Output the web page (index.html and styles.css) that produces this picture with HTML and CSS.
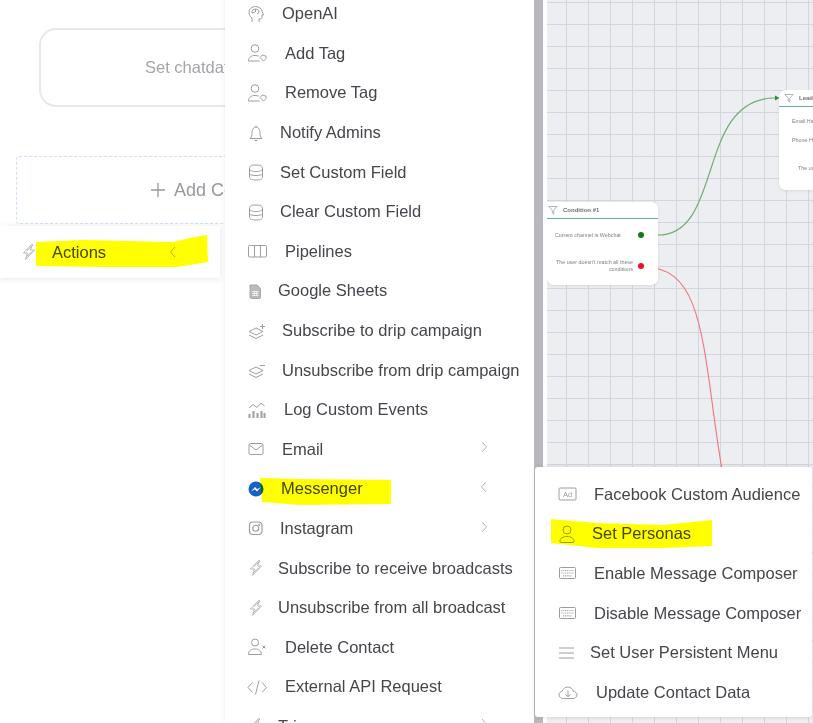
FILE: index.html
```html
<!DOCTYPE html>
<html lang="en">
<head>
<meta charset="utf-8">
<title>Flow builder</title>
<link rel="stylesheet" href="styles.css">
</head>
<body>
<svg class="defs" width="0" height="0" aria-hidden="true">
  <symbol id="i-brain" viewBox="0 0 20 20"><path d="M5 18v-4C3 12.600 2 10.800 2 8.500 2 5 5 2.500 8.500 2.500S15 5 15.300 8l1.200 3h-1.500v2.500c0 1-.8 1.500-1.700 1.500H12v3"/><path d="M5 9c-.5-2.500 1.500-4 3.500-4 2.200 0 3.800 1.500 3.500 3.500M8.500 5v3M5 9l3-1M12 8.500l-2 1.500"/></symbol>
  <symbol id="i-usertag" viewBox="0 0 20 20"><circle cx="8" cy="5.500" r="3.800"/><path d="M1.500 18c0-3.800 2.800-5.500 6.500-5.500 1.500 0 2.800.2 3.800.7M1.500 18h11"/><path d="M13 14.500l2.500-2.500 3.500 1.200v2.300l-2.500 2.500z"/></symbol>
  <symbol id="i-bell" viewBox="0 0 20 20"><path d="M3 15.500c1.500-1.500 2-3 2-6C5 6.500 6.500 4 9 4s4 2.500 4 5.500c0 3 .5 4.500 2 6zM9 2.500V4M7.500 17.500h3"/></symbol>
  <symbol id="i-db" viewBox="0 0 20 20"><path d="M2.500 6c0-2 2.500-3 6.500-3s6.500 1 6.500 3v9c0 2-2.500 3-6.500 3s-6.500-1-6.500-3z"/><path d="M2.500 6.500c0 2 2.500 3 6.500 3s6.500-1 6.500-3M2.500 12c1 1 3.500 1.500 6.500 1.500s5.500-.5 6.500-1.500"/></symbol>
  <symbol id="i-pipe" viewBox="0 0 20 20"><rect x="1.500" y="4.500" width="18" height="11.500" rx="1"/><path d="M7.500 4.500V16M13.500 4.500V16"/></symbol>
  <symbol id="i-sheet" viewBox="0 0 20 20"><path class="solid soft" d="M3 4h7l3.500 3.500V16a1.500 1.500 0 0 1-1.500 1.500H4.500A1.500 1.500 0 0 1 3 16z"/><path class="cut" d="M5 10.500h6.500M5 12.500h6.500M5 14.500h6.500M7.500 10.500v4M9.500 10.500v4"/></symbol>
  <symbol id="i-layplus" viewBox="0 0 20 20"><path d="M2 10.500L9 7l7 3.500-7 3.500zM2 14l7 3.500 7-3.500"/><path d="M13 5.500h5M15.500 3v5"/></symbol>
  <symbol id="i-laymin" viewBox="0 0 20 20"><path d="M2 10.500L9 7l7 3.500-7 3.500zM2 14l7 3.500 7-3.500"/><path d="M13 5.500h5"/></symbol>
  <symbol id="i-chart" viewBox="0 0 20 20"><path d="M2 8l4-3.500 4 3 4-4.500 3.500 3"/><path class="thick" d="M2.500 18v-4M6.500 18v-7M10.500 18v-5M14.500 18v-7M17.500 18v-5"/></symbol>
  <symbol id="i-mail" viewBox="0 0 20 20"><rect x="2" y="4.500" width="14" height="11" rx="1.500"/><path d="M2.500 6l6.500 5 6.500-5"/></symbol>
  <symbol id="i-ig" viewBox="0 0 20 20"><rect x="2.500" y="3" width="12.500" height="12.500" rx="3.500" class="mid"/><circle cx="8.750" cy="9.250" r="3" class="mid"/><circle cx="12.200" cy="5.800" r=".7" class="solid"/></symbol>
  <symbol id="i-bolt" viewBox="0 0 20 20"><g class="pale"><path d="M11.500 2.500L3.500 11h4l-2 6.500 9-9.500h-4l2-5.500z"/><path d="M7 8.500L13 3M6.500 14.500l6-5"/></g></symbol>
  <symbol id="i-userx" viewBox="0 0 20 20"><circle cx="8" cy="5.500" r="3.500"/><path d="M1.500 17.500c0-3.800 2.800-5.500 6.500-5.500s6.500 1.700 6.500 5.500z"/><path d="M15.500 8.500l3 3M18.500 8.500l-3 3"/></symbol>
  <symbol id="i-code" viewBox="0 0 20 20"><path d="M5.500 5.500L1 10.500l4.500 5M15 5.500l4.500 5-4.500 5M12 3.500L8.500 17.500"/></symbol>
  <symbol id="i-ad" viewBox="0 0 20 20"><rect x="1" y="4" width="17" height="12" rx="1"/><text x="9.500" y="13" class="adtxt">Ad</text></symbol>
  <symbol id="i-user" viewBox="0 0 20 20"><circle cx="9" cy="6" r="4"/><path d="M2 17.500c0-3.500 3-5 7-5s7 1.500 7 5c0 .5-.5 1-1 1H3c-.5 0-1-.5-1-1z"/></symbol>
  <symbol id="i-kbd" viewBox="0 0 20 20"><rect x="1.500" y="4.500" width="16" height="11" rx="1"/><path class="dots" d="M3.500 7.500h12M3.500 10h12M5 12.800h9"/></symbol>
  <symbol id="i-menu" viewBox="0 0 20 20"><path d="M1 5h15M1 10h15M1 15h15"/></symbol>
  <symbol id="i-cloud" viewBox="0 0 20 20"><path d="M5.500 16.500C3 16.500 1 15 1 12.800c0-2 1.500-3.300 3.200-3.500C5 6.500 7.300 5 9.800 5c2.800 0 5 1.800 5.400 4.300 2 .2 3.800 1.500 3.800 3.500 0 2.200-2 3.700-4 3.700z"/><path d="M10 8.500v6M7.500 12.300l2.500 2.500 2.500-2.500"/></symbol>
  <symbol id="i-funnel" viewBox="0 0 20 20"><path d="M2 3h16l-6.500 7.500V18l-3-2v-5.500z"/></symbol>
</svg>

<main class="page">
  <section class="editor">
    <div class="setbox"><span>Set chatdata</span></div>
    <div class="addbox"><svg class="plus" viewBox="0 0 16 16"><path d="M8 1v14M1 8h14"/></svg><span>Add Condition</span></div>
    <div class="actions">
      <svg class="ico act-ico"><use href="#i-bolt"/></svg>
      <span class="act-label">Actions</span>
      <svg class="chev act-chev" viewBox="0 0 8 12"><path d="M6 1L1.500 6 6 11"/></svg>
    </div>
  </section>
  <div class="scrollbar"></div>
  <section class="canvas">
    <svg class="wires" width="266" height="723" viewBox="547 0 266 723">
      <path class="wire-green" d="M658 235C724 235 696 98 775 98"/>
      <path class="arrow" d="M775 95.500l4.500 2.500-4.500 2.500z"/>
      <path class="wire-red" d="M644 267C706 267 702 350 722 470"/>
    </svg>
    <article class="node node-cond">
      <header class="node-head">
        <svg class="ico funnel"><use href="#i-funnel"/></svg>
        <span class="node-title">Condition #1</span>
      </header>
      <div class="cond-row cond-a"><span>Current channel is Webchat</span><i class="dot dot-green"></i></div>
      <div class="cond-row cond-b"><span>The user doesn't match all these conditions</span><i class="dot dot-red"></i></div>
    </article>
    <article class="node node-lead">
      <header class="node-head">
        <svg class="ico funnel"><use href="#i-funnel"/></svg>
        <span class="node-title">Lead</span>
      </header>
      <div class="lead-line lead-a">Email Has Value</div>
      <div class="lead-line lead-b">Phone Has Value</div>
      <div class="lead-line lead-c">The user</div>
    </article>
  </section>
</main>

<nav class="menu">
  <a class="row"><svg class="ico"><use href="#i-brain"/></svg><span class="lab g15">OpenAI</span></a>
  <a class="row"><svg class="ico"><use href="#i-usertag"/></svg><span class="lab g18">Add Tag</span></a>
  <a class="row"><svg class="ico"><use href="#i-usertag"/></svg><span class="lab g18">Remove Tag</span></a>
  <a class="row"><svg class="ico"><use href="#i-bell"/></svg><span class="lab g13">Notify Admins</span></a>
  <a class="row"><svg class="ico"><use href="#i-db"/></svg><span class="lab g13">Set Custom Field</span></a>
  <a class="row"><svg class="ico"><use href="#i-db"/></svg><span class="lab g13">Clear Custom Field</span></a>
  <a class="row"><svg class="ico"><use href="#i-pipe"/></svg><span class="lab g18">Pipelines</span></a>
  <a class="row"><svg class="ico"><use href="#i-sheet"/></svg><span class="lab g11">Google Sheets</span></a>
  <a class="row"><svg class="ico"><use href="#i-layplus"/></svg><span class="lab g15">Subscribe to drip campaign</span></a>
  <a class="row"><svg class="ico"><use href="#i-laymin"/></svg><span class="lab g15">Unsubscribe from drip campaign</span></a>
  <a class="row"><svg class="ico"><use href="#i-chart"/></svg><span class="lab g17">Log Custom Events</span></a>
  <a class="row"><svg class="ico"><use href="#i-mail"/></svg><span class="lab g15">Email</span><svg class="chev" viewBox="0 0 8 12"><path d="M2 1l4.500 5L2 11"/></svg></a>
  <a class="row"><svg class="ico messenger" viewBox="0 0 20 20"><circle cx="9" cy="10" r="7.500"/><path d="M4 12.500L8 8l2.200 2.300L14 8l-4 4.500-2.200-2.300z"/></svg><span class="lab g14">Messenger</span><svg class="chev" viewBox="0 0 8 12"><path d="M6 1L1.500 6 6 11"/></svg></a>
  <a class="row"><svg class="ico"><use href="#i-ig"/></svg><span class="lab g13">Instagram</span><svg class="chev" viewBox="0 0 8 12"><path d="M2 1l4.500 5L2 11"/></svg></a>
  <a class="row"><svg class="ico"><use href="#i-bolt"/></svg><span class="lab g11">Subscribe to receive broadcasts</span></a>
  <a class="row"><svg class="ico"><use href="#i-bolt"/></svg><span class="lab g11">Unsubscribe from all broadcast</span></a>
  <a class="row"><svg class="ico"><use href="#i-userx"/></svg><span class="lab g18">Delete Contact</span></a>
  <a class="row"><svg class="ico"><use href="#i-code"/></svg><span class="lab g18">External API Request</span></a>
  <a class="row"><svg class="ico"><use href="#i-bolt"/></svg><span class="lab g11">Trigger</span><svg class="chev" viewBox="0 0 8 12"><path d="M2 1l4.500 5L2 11"/></svg></a>
</nav>

<nav class="submenu">
  <a class="subrow"><svg class="ico"><use href="#i-ad"/></svg><span class="sublab s15">Facebook Custom Audience</span></a>
  <a class="subrow"><svg class="ico"><use href="#i-user"/></svg><span class="sublab s13">Set Personas</span></a>
  <a class="subrow"><svg class="ico"><use href="#i-kbd"/></svg><span class="sublab s15">Enable Message Composer</span></a>
  <a class="subrow"><svg class="ico"><use href="#i-kbd"/></svg><span class="sublab s15">Disable Message Composer</span></a>
  <a class="subrow"><svg class="ico"><use href="#i-menu"/></svg><span class="sublab s11">Set User Persistent Menu</span></a>
  <a class="subrow"><svg class="ico"><use href="#i-cloud"/></svg><span class="sublab s17">Update Contact Data</span></a>
</nav>

<svg class="marker" width="813" height="723" viewBox="0 0 813 723" aria-hidden="true">
  <path d="M36 242L83 240L173 242L190 238L207 235L208 262L177 267L100 267L36 266z"/>
  <path d="M260 478L300 479L391 480L391 504L300 505L262 502z"/>
  <path d="M551 519L597 523L663 525L712 520L712 546L663 548L597 548L551 543z"/>
</svg>
</body>
</html>
```

FILE: styles.css
```css
* { box-sizing: border-box; }

html, body {
  margin: 0;
  height: 100%;
  overflow: hidden;
  background: #fff;
  font-family: "Liberation Sans", Arial, sans-serif;
  font-size: 16.500px;
  color: #43464b;
}

.defs { position: absolute; }

.page {
  display: flex;
  height: 723px;
}

.editor {
  flex: none;
  width: 534px;
  padding-top: 28px;
}

.scrollbar {
  flex: none;
  width: 9px;
  background: #b8b8be;
}

.setbox {
  width: 400px;
  height: 79px;
  margin-left: 39px;
  padding-left: 104px;
  display: flex;
  align-items: center;
  border: 2px solid #e6e8ee;
  border-radius: 17px;
  color: #a2a5a9;
}

.addbox {
  width: 440px;
  height: 68px;
  margin: 49px 0 0 16px;
  padding-left: 133px;
  display: flex;
  align-items: center;
  gap: 8px;
  border: 1px dashed #cfe2f1;
  border-radius: 3px;
  color: #97999f;
  font-size: 18px;
}

.plus {
  flex: none;
  width: 16px;
  height: 16px;
  fill: none;
  stroke: #97999f;
  stroke-width: 1.300;
}

.actions {
  position: relative;
  width: 220px;
  height: 52px;
  margin-top: 2px;
  padding-left: 20px;
  display: flex;
  align-items: center;
  background: #fff;
  box-shadow: 0 1px 6px rgba(60, 64, 80, .13);
}

.act-label { margin-left: 12px; }

.act-chev {
  margin-left: auto;
  margin-right: 43px;
}

.ico {
  flex: none;
  width: 20px;
  height: 20px;
  fill: none;
  stroke: #9b9ea3;
  stroke-width: 1;
}

.solid { fill: #a6a8ac; stroke: #a6a8ac; }
.soft { fill: #b9bbbf; stroke: #a6a8ac; }
.cut { stroke: #fff; stroke-width: .7; }
.pale { stroke: #b4b6ba; }
.thick { stroke-width: 2; }
.mid { stroke-width: 1.200; }
.dots { stroke-dasharray: 1 .8; stroke-width: 1.200; }
.adtxt {
  font-family: "Liberation Sans", Arial, sans-serif;
  font-size: 7.500px;
  text-anchor: middle;
  fill: #9b9ea3;
  stroke: none;
}

.chev {
  flex: none;
  width: 8px;
  height: 12px;
  fill: none;
  stroke: #b1b3b8;
  stroke-width: 1;
}

.canvas {
  position: relative;
  flex: 1;
  margin-left: 4px;
  overflow: hidden;
  background-color: #eceef1;
  background-image:
    linear-gradient(to right, #d3d6dc 1px, transparent 1px),
    linear-gradient(to bottom, #d3d6dc 1px, transparent 1px);
  background-size: 22px 22px;
  background-position: 19px 2px;
}

.wires {
  position: absolute;
  left: 0;
  top: 0;
  fill: none;
}

.wire-green { stroke: #6dab6e; stroke-width: 1.200; }
.wire-red { stroke: #f0787a; stroke-width: 1.100; }
.arrow { fill: #2f8f33; }

.node {
  position: absolute;
  background: #fff;
  border-radius: 0 7px 7px 7px;
  font-size: 5.350px;
  color: #7c7e84;
  box-shadow: 0 1px 3px rgba(80, 85, 100, .12);
}

.node-cond {
  left: 0;
  top: 202px;
  width: 111px;
  height: 83px;
}

.node-lead {
  left: 232px;
  top: 90px;
  width: 60px;
  height: 100px;
  border-radius: 7px 0 0 7px;
}

.node-head {
  height: 17px;
  padding-left: 1px;
  display: flex;
  align-items: center;
  border-bottom: 1px solid #62b09b;
}

.funnel {
  width: 10px;
  height: 10px;
  stroke: #7d8088;
  stroke-width: 1.200;
}

.node-lead .funnel { margin-left: 4px; }

.node-title {
  margin-left: 5px;
  font-size: 6px;
  font-weight: 700;
  color: #6e7076;
}

.cond-row {
  position: absolute;
  left: 8px;
  display: flex;
  align-items: center;
  width: 97px;
}

.cond-row span { width: 78px; }
.cond-a { top: 30px; }
.cond-b { top: 57px; }
.cond-a span { white-space: nowrap; }
.cond-b span { text-align: right; line-height: 7px; }

.dot {
  flex: none;
  width: 6px;
  height: 6px;
  margin-left: 5px;
  border-radius: 50%;
}

.dot-green { background: #0e7d18; }
.dot-red { background: #ed0f22; }

.lead-line {
  position: absolute;
  white-space: nowrap;
}

.lead-a { left: 13px; top: 28px; }
.lead-b { left: 13px; top: 47px; }
.lead-c { left: 19px; top: 75px; }

.menu {
  position: absolute;
  left: 225px;
  top: -6px;
  width: 309px;
  height: 729px;
  background: #fff;
  overflow: hidden;
  box-shadow: 0 0 5px rgba(60, 64, 80, .1);
  clip-path: inset(0 0 0 -8px);
}

.row {
  height: 39.600px;
  padding: 0 46px 0 22px;
  display: flex;
  align-items: center;
}

.row .chev { margin-left: auto; margin-top: -4px; }
.lab { white-space: nowrap; }
.g11 { margin-left: 11px; }
.g13 { margin-left: 13px; }
.g14 { margin-left: 14px; }
.g15 { margin-left: 15px; }
.g17 { margin-left: 17px; }
.g18 { margin-left: 18px; }

.messenger { stroke: none; fill: #1461c9; }
.messenger path { fill: #fff; }

.submenu {
  position: absolute;
  left: 535px;
  top: 467px;
  width: 277px;
  height: 250px;
  padding-top: 7.500px;
  background: #fff;
  border-radius: 3px;
  box-shadow: 0 0 4px rgba(60, 64, 80, .18);
}

.subrow {
  height: 39.600px;
  padding-left: 23px;
  display: flex;
  align-items: center;
}

.sublab { white-space: nowrap; }
.s11 { margin-left: 12px; }
.s13 { margin-left: 14px; }
.s15 { margin-left: 16px; }
.s17 { margin-left: 18px; }

.marker {
  position: absolute;
  left: 0;
  top: 0;
  fill: #ffff00;
  mix-blend-mode: multiply;
  pointer-events: none;
}
```
